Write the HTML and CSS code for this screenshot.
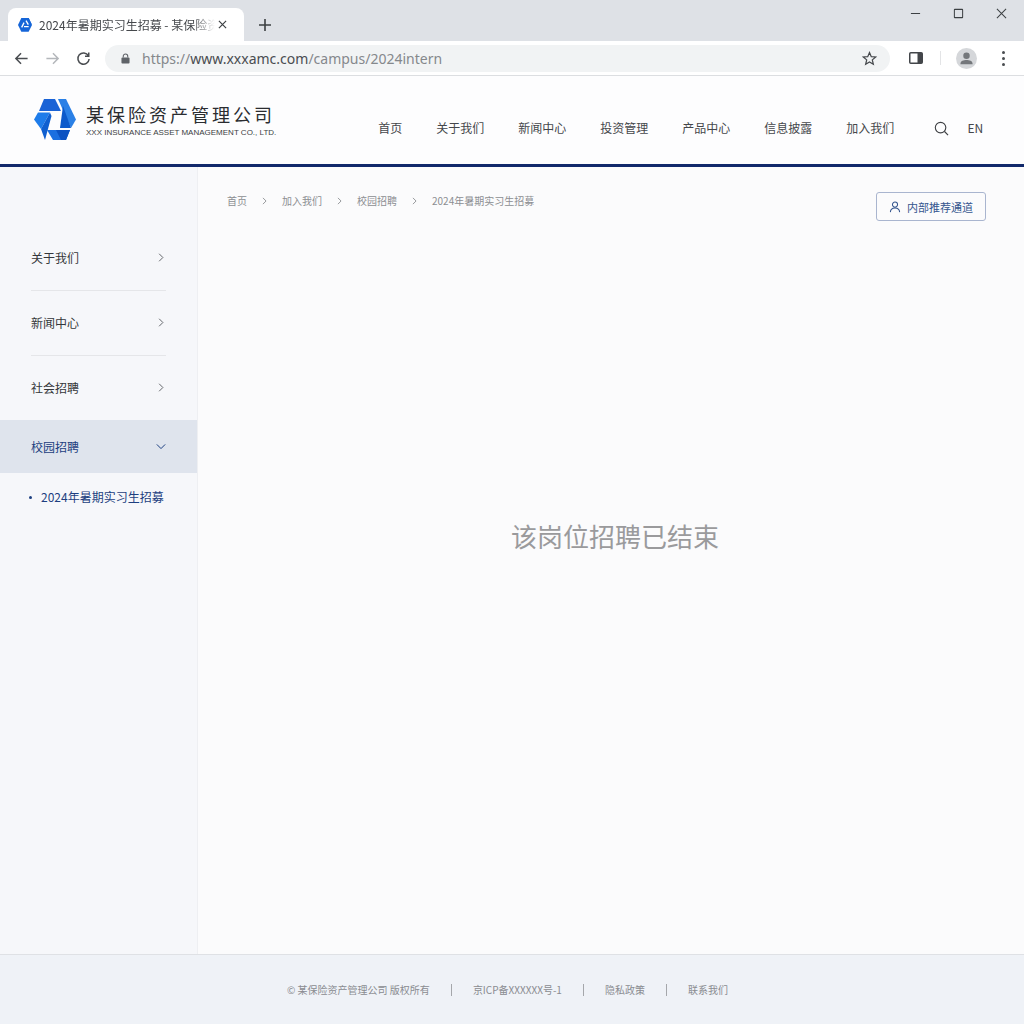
FILE: index.html
```html
<!DOCTYPE html>
<html lang="zh-CN">
<head>
    <meta charset="UTF-8">
    <title>2024年暑期实习生招募 - 某保险资产管理公司</title>
    <link rel="stylesheet" href="styles.css">
</head>
<body>
    <!-- Browser tab strip -->
    <div class="tabstrip">
        <div class="tab">
            <svg class="tab-icon" viewBox="0 0 42 42">
                <polygon points="10,0 32,0 42,20 10,0" fill="#1565d8"/>
                <polygon points="0,21 10,0 32,0 42,21 32,41 10,41" fill="#1565d8"/>
                <path d="M24 8 L31 20 M32 26 L18 26 M11 28 L18 14" stroke="#fff" stroke-width="4"/>
            </svg>
            <span class="tab-title">2024年暑期实习生招募 - 某保险资产管理公司</span>
            <svg class="tab-close" viewBox="0 0 10 10"><path d="M1 1 L9 9 M9 1 L1 9"/></svg>
        </div>
        <svg class="new-tab" viewBox="0 0 12 12"><path d="M6 0 V12 M0 6 H12"/></svg>
        <div class="win-controls">
            <svg viewBox="0 0 12 12"><path d="M1 6 H11"/></svg>
            <svg viewBox="0 0 12 12"><rect x="1.5" y="1.5" width="9" height="9" rx="0.5"/></svg>
            <svg viewBox="0 0 12 12"><path d="M1 1 L11 11 M11 1 L1 11"/></svg>
        </div>
    </div>

    <!-- Address bar -->
    <div class="toolbar">
        <svg class="tool-icon" viewBox="0 0 16 16"><path d="M14.5 8 H2 M7.5 2.5 L2 8 L7.5 13.5"/></svg>
        <svg class="tool-icon faded" viewBox="0 0 16 16"><path d="M1.5 8 H14 M8.5 2.5 L14 8 L8.5 13.5"/></svg>
        <svg class="tool-icon" viewBox="0 0 16 16"><path d="M13.2 5 A6 6 0 1 0 14 8.5 M13.6 1.5 V5.5 H9.6"/></svg>
        <div class="omnibox">
            <svg class="lock" viewBox="0 0 10 12"><path d="M2.5 5 V3.5 A2.5 2.5 0 0 1 7.5 3.5 V5" fill="none" stroke="#5f6368" stroke-width="1.2"/><rect x="0.5" y="5" width="9" height="6.5" rx="1" fill="#5f6368"/></svg>
            <span class="url"><span class="url-dim">https://</span>www.xxxamc.com<span class="url-dim">/campus/2024intern</span></span>
            <svg class="star" viewBox="0 0 16 16"><path d="M8 1.6 L9.9 6 L14.6 6.4 L11 9.5 L12.1 14.2 L8 11.7 L3.9 14.2 L5 9.5 L1.4 6.4 L6.1 6 Z"/></svg>
        </div>
        <svg class="panel-icon" viewBox="0 0 14 12"><rect x="0.75" y="0.75" width="12.5" height="10.5" rx="1" fill="none" stroke="#43464a" stroke-width="1.5"/><rect x="8.5" y="1" width="4.5" height="10" fill="#43464a"/></svg>
        <div class="tool-sep"></div>
        <div class="avatar">
            <svg viewBox="0 0 22 22"><circle cx="11" cy="8" r="3.4"/><path d="M4.6 17 C4.6 13.4 8 12.6 11 12.6 C14 12.6 17.4 13.4 17.4 17 Z"/></svg>
        </div>
        <div class="kebab"><i></i><i></i><i></i></div>
    </div>

    <!-- Site header -->
    <header class="site-header">
        <div class="logo">
            <svg class="logo-mark" viewBox="0 0 42 42">
                <polygon points="10,0 21,0 27,12 5,12 " fill="#1a63d6"/>
                <polygon points="4,13.5 16,13.5 7,30 0,20.5" fill="#1e7cea"/>
                <polygon points="7,30 16,13.5 17.5,17 11,41" fill="#0f5fd0"/>
                <polygon points="24,0 32,0 42,20.5 37,29 " fill="#2a80e6"/>
                <polygon points="23,4 37,29 30,29 20,12" fill="#1060d2" opacity="0"/>
                <polygon points="29,7 37,29 26,29 " fill="#0c5acb"/>
                <polygon points="13,31 36,31 32,41 19,41" fill="#1b6fe0"/>
                <polygon points="22,31 36,31 32,41 27,41" fill="#0b52c2"/>
            </svg>
            <div class="logo-text">
                <div class="logo-cn">某保险资产管理公司</div>
                <div class="logo-en">XXX INSURANCE ASSET MANAGEMENT CO., LTD.</div>
            </div>
        </div>
        <nav class="main-nav">
            <a>首页</a>
            <a>关于我们</a>
            <a>新闻中心</a>
            <a>投资管理</a>
            <a>产品中心</a>
            <a>信息披露</a>
            <a>加入我们</a>
        </nav>
        <svg class="search" viewBox="0 0 16 16"><circle cx="7" cy="7" r="5.6"/><path d="M11.2 11.2 L15 15"/></svg>
        <span class="lang">EN</span>
    </header>

    <div class="page">
        <!-- Sidebar -->
        <aside class="sidebar">
            <div class="side-item">关于我们<svg class="chev" viewBox="0 0 8 12"><path d="M1.5 1 L6.5 6 L1.5 11"/></svg></div>
            <div class="side-item">新闻中心<svg class="chev" viewBox="0 0 8 12"><path d="M1.5 1 L6.5 6 L1.5 11"/></svg></div>
            <div class="side-item last">社会招聘<svg class="chev" viewBox="0 0 8 12"><path d="M1.5 1 L6.5 6 L1.5 11"/></svg></div>
            <div class="side-active">校园招聘<svg class="chev-down" viewBox="0 0 12 8"><path d="M1 1.5 L6 6.5 L11 1.5"/></svg></div>
            <div class="side-sub"><i></i>2024年暑期实习生招募</div>
        </aside>

        <!-- Main content -->
        <main class="content">
            <div class="content-top">
                <div class="crumbs">
                    <span>首页</span>
                    <svg class="crumb-sep" viewBox="0 0 8 12"><path d="M1.5 1 L6.5 6 L1.5 11"/></svg>
                    <span>加入我们</span>
                    <svg class="crumb-sep" viewBox="0 0 8 12"><path d="M1.5 1 L6.5 6 L1.5 11"/></svg>
                    <span>校园招聘</span>
                    <svg class="crumb-sep" viewBox="0 0 8 12"><path d="M1.5 1 L6.5 6 L1.5 11"/></svg>
                    <span>2024年暑期实习生招募</span>
                </div>
                <div class="refer-btn">
                    <svg viewBox="0 0 14 14"><circle cx="7" cy="4.2" r="3"/><path d="M1.6 13 C1.8 9.6 4 8.2 7 8.2 C10 8.2 12.2 9.6 12.4 13"/></svg>
                    内部推荐通道
                </div>
            </div>
            <p class="closed-msg">该岗位招聘已结束</p>
        </main>
    </div>

    <!-- Footer -->
    <footer class="site-footer">
        <span>© 某保险资产管理公司 版权所有</span>
        <i class="foot-sep"></i>
        <span>京ICP备XXXXXX号-1</span>
        <i class="foot-sep"></i>
        <span>隐私政策</span>
        <i class="foot-sep"></i>
        <span>联系我们</span>
    </footer>
</body>
</html>
```

FILE: styles.css
```css
* {
    box-sizing: border-box;
}

body {
    margin: 0;
    height: 1024px;
    overflow: hidden;
    display: flex;
    flex-direction: column;
    font-family: "Noto Sans CJK SC", "Noto Sans", sans-serif;
    background: #fbfbfc;
}

svg {
    display: block;
    flex: none;
}

/* Browser chrome */
.tabstrip {
    height: 41px;
    background: #dee1e6;
    display: flex;
    align-items: flex-end;
    padding-left: 8px;
    flex: none;
}

.tab {
    width: 236px;
    height: 33px;
    background: #fff;
    border-radius: 8px 8px 0 0;
    display: flex;
    align-items: center;
    padding: 0 9px 0 10px;
}

.tab-icon {
    width: 14px;
    height: 14px;
}

.tab-title {
    width: 176px;
    margin-left: 7px;
    font-size: 12px;
    color: #45484c;
    white-space: nowrap;
    overflow: hidden;
    -webkit-mask-image: linear-gradient(to right, #000 88%, transparent);
    mask-image: linear-gradient(to right, #000 88%, transparent);
}

.tab-close {
    width: 9px;
    height: 9px;
    margin-left: 3px;
    fill: none;
    stroke: #3c4043;
    stroke-width: 1.3;
}

.new-tab {
    width: 12px;
    height: 12px;
    margin: 0 0 10px 15px;
    fill: none;
    stroke: #3c4043;
    stroke-width: 1.6;
}

.win-controls {
    margin-left: auto;
    align-self: flex-start;
    display: flex;
    gap: 32px;
    padding: 8px 17px 0 0;
}

.win-controls svg {
    width: 11px;
    height: 11px;
    fill: none;
    stroke: #3c4043;
    stroke-width: 1.1;
}

.toolbar {
    height: 35px;
    background: #fff;
    border-bottom: 1px solid #dcdee1;
    display: flex;
    align-items: center;
    flex: none;
    padding-left: 14px;
}

.tool-icon {
    width: 15px;
    height: 15px;
    margin-right: 16px;
    fill: none;
    stroke: #4a4d51;
    stroke-width: 1.6;
}

.tool-icon.faded {
    stroke: #b4b7bb;
}

.omnibox {
    width: 785px;
    height: 27px;
    margin-left: -2px;
    background: #f1f3f4;
    border-radius: 14px;
    display: flex;
    align-items: center;
    padding-left: 16px;
}

.lock {
    width: 9px;
    height: 11px;
}

.url {
    margin-left: 12px;
    font-family: "Noto Sans", sans-serif;
    font-size: 14px;
    color: #4a4d51;
}

.url-dim {
    color: #85888c;
}

.star {
    width: 15px;
    height: 15px;
    margin-left: auto;
    margin-right: 13px;
    fill: none;
    stroke: #45484c;
    stroke-width: 1.3;
}

.panel-icon {
    width: 14px;
    height: 12px;
    margin-left: 19px;
}

.tool-sep {
    width: 1px;
    height: 14px;
    margin-left: 17px;
    background: #e3e4e6;
}

.avatar {
    width: 21px;
    height: 21px;
    margin-left: 15px;
    border-radius: 50%;
    background: #d5d7da;
}

.avatar svg {
    width: 21px;
    height: 21px;
    fill: #74777b;
}

.kebab {
    margin-left: 25px;
    display: flex;
    flex-direction: column;
    gap: 3px;
}

.kebab i {
    width: 3px;
    height: 3px;
    border-radius: 50%;
    background: #4a4d51;
}

/* Site header */
.site-header {
    height: 91px;
    background: #fdfdfe;
    border-bottom: 3px solid #12296b;
    display: flex;
    align-items: flex-start;
    flex: none;
    padding-left: 34px;
}

.logo {
    display: flex;
    align-items: center;
    margin-top: 23px;
}

.logo-mark {
    width: 42px;
    height: 42px;
}

.logo-text {
    margin-left: 10px;
}

.logo-cn {
    font-size: 18px;
    line-height: 24px;
    letter-spacing: 3px;
    color: #2a2c30;
    white-space: nowrap;
}

.logo-en {
    font-family: "Liberation Sans", sans-serif;
    font-size: 8px;
    line-height: 10px;
    margin-top: 2px;
    color: #3c3e42;
    white-space: nowrap;
}

.main-nav {
    position: static;
    display: flex;
    gap: 34px;
    margin-left: 102px;
    margin-top: 43px;
    font-size: 12px;
    line-height: 18px;
    color: #45474b;
}

.search {
    width: 15px;
    height: 15px;
    margin: 45px 0 0 40px;
    fill: none;
    stroke: #3f4145;
    stroke-width: 1.2;
}

.lang {
    margin: 43px 0 0 18px;
    font-size: 12px;
    line-height: 18px;
    color: #45474b;
}

/* Page body */
.page {
    flex: 1;
    display: flex;
    min-height: 0;
}

.sidebar {
    width: 198px;
    flex: none;
    background: #f6f7fa;
    border-right: 1px solid #eeeff2;
    padding-top: 59px;
    font-size: 12px;
    color: #35373b;
}

.side-item {
    height: 65px;
    margin: 0 31px;
    display: flex;
    align-items: center;
    justify-content: space-between;
    border-bottom: 1px solid #e5e6e9;
    padding: 0 2px 2px 0;
}

.side-item.last {
    border-bottom: none;
    height: 64px;
}

.chev {
    width: 6px;
    height: 9px;
    fill: none;
    stroke: #55575b;
    stroke-width: 1.2;
}

.side-active {
    height: 53px;
    background: #dfe4ed;
    display: flex;
    align-items: center;
    justify-content: space-between;
    padding: 0 31px 0 31px;
    color: #1d3f80;
}

.chev-down {
    width: 10px;
    height: 7px;
    fill: none;
    stroke: #1d3f80;
    stroke-width: 1.2;
}

.side-sub {
    display: flex;
    align-items: center;
    padding: 15px 0 0 29px;
    color: #1d3f80;
    line-height: 18px;
}

.side-sub i {
    width: 3px;
    height: 3px;
    margin-right: 9px;
    border-radius: 50%;
    background: #1d3f80;
}

.content {
    flex: 1;
    min-width: 0;
}

.content-top {
    display: flex;
    align-items: flex-start;
    justify-content: space-between;
    padding: 25px 38px 0 29px;
}

.crumbs {
    display: flex;
    align-items: center;
    gap: 14px;
    height: 17px;
    font-size: 10px;
    color: #8c8e92;
}

.crumb-sep {
    width: 5px;
    height: 8px;
    margin: 0 1px;
    fill: none;
    stroke: #77797d;
    stroke-width: 1.2;
}

.refer-btn {
    width: 110px;
    height: 29px;
    border: 1px solid #a9b5cf;
    border-radius: 3px;
    display: flex;
    align-items: center;
    justify-content: center;
    gap: 6px;
    font-size: 11px;
    color: #34558e;
}

.refer-btn svg {
    width: 12px;
    height: 12px;
    fill: none;
    stroke: #34558e;
    stroke-width: 1.2;
}

.closed-msg {
    margin: 296px 0 0;
    padding-left: 8px;
    text-align: center;
    font-size: 26px;
    line-height: 38px;
    color: #9a9a9c;
}

/* Footer */
.site-footer {
    height: 70px;
    flex: none;
    background: #eff2f7;
    border-top: 1px solid #dfe1e5;
    display: flex;
    align-items: center;
    justify-content: center;
    gap: 21px;
    padding: 0 9px 0 0;
    font-size: 10px;
    color: #8a8c91;
}

.foot-sep {
    width: 1px;
    height: 12px;
    background: #a5a7ab;
}
```
